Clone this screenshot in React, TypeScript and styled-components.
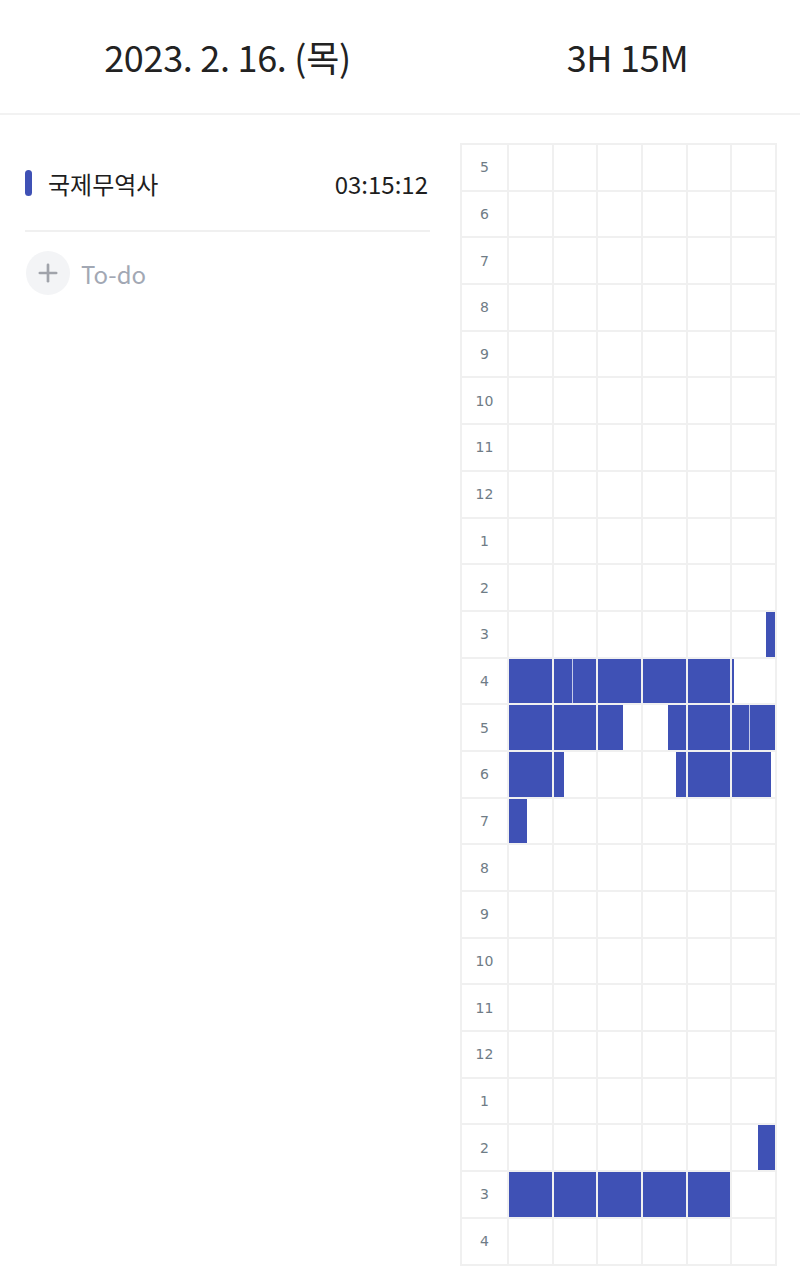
import styled, { createGlobalStyle } from "styled-components";
import { Plus } from "lucide-react";

const GlobalStyle = createGlobalStyle`
  * { box-sizing: border-box; }
  html, body {
    margin: 0;
    padding: 0;
    background: #ffffff;
    font-family: "Noto Sans CJK KR", "Noto Sans", sans-serif;
    color: #222222;
  }
`;

const BLUE = "#3f51b5";

// hour labels, 5am through 4am of the next day
const hours = [5, 6, 7, 8, 9, 10, 11, 12, 1, 2, 3, 4, 5, 6, 7, 8, 9, 10, 11, 12, 1, 2, 3, 4];

// studied minutes for each row, as [start, end] within the hour
const sessions: Record<number, [number, number][]> = {
  10: [[58, 60]],
  11: [
    [0, 14.2],
    [14.2, 50.3],
  ],
  12: [
    [0, 25.8],
    [35.8, 53.8],
    [53.8, 60],
  ],
  13: [
    [0, 12.4],
    [37.8, 59.1],
  ],
  14: [[0, 4.2]],
  21: [[56.1, 60]],
  22: [[0, 50]],
};

export default function App() {
  return (
    <Page>
      <GlobalStyle />
      <Header>
        <HeaderCell>2023. 2. 16. (목)</HeaderCell>
        <HeaderCell $narrow>3H 15M</HeaderCell>
      </Header>
      <Body>
        <TodoList>
          <Subject>
            <ColorBar />
            <SubjectName>국제무역사</SubjectName>
            <SubjectTime>03:15:12</SubjectTime>
          </Subject>
          <AddRow>
            <AddIcon>
              <Plus size={28} strokeWidth={2.3} />
            </AddIcon>
            <AddLabel>To-do</AddLabel>
          </AddRow>
        </TodoList>
        <TimetableWrap>
          <Timetable>
            {hours.map((h, row) => (
              <Row key={row}>
                <HourLabel>{h}</HourLabel>
                {[0, 1, 2, 3, 4, 5].map((col) => (
                  <Slot key={col}>
                    {(sessions[row] || []).map(([s, e], i, list) => {
                      const from = Math.max(s, col * 10);
                      const to = Math.min(e, col * 10 + 10);
                      if (to <= from) return null;
                      const joined = i > 0 && list[i - 1][1] === s && s > col * 10;
                      return (
                        <Fill
                          key={i}
                          $joined={joined}
                          style={{
                            left: `${(from - col * 10) * 10}%`,
                            width: `${(to - from) * 10}%`,
                          }}
                        />
                      );
                    })}
                  </Slot>
                ))}
              </Row>
            ))}
          </Timetable>
        </TimetableWrap>
      </Body>
    </Page>
  );
}

const Page = styled.div`
  width: 800px;
  min-height: 1268px;
  background: #fff;
`;

const Header = styled.header`
  display: flex;
  height: 115px;
  border-bottom: 2px solid #f2f2f2;
`;

const HeaderCell = styled.div<{ $narrow?: boolean }>`
  width: ${({ $narrow }) => ($narrow ? "345px" : "455px")};
  display: flex;
  align-items: center;
  justify-content: center;
  font-size: 36px;
  font-weight: 400;
  letter-spacing: -0.3px;
  color: #222;
  padding-bottom: 2px;
`;

const Body = styled.div`
  display: flex;
`;

const TodoList = styled.section`
  width: 455px;
  padding: 21px 25px 0;
`;

const Subject = styled.div`
  display: flex;
  align-items: center;
  height: 96px;
  border-bottom: 2px solid #f0f0f0;
`;

const ColorBar = styled.span`
  width: 7px;
  height: 26px;
  border-radius: 4px;
  background: ${BLUE};
  margin-right: 16px;
`;

const SubjectName = styled.span`
  flex: 1;
  font-size: 24px;
  font-weight: 400;
  color: #1e1e1e;
`;

const SubjectTime = styled.span`
  font-size: 24px;
  font-weight: 400;
  color: #1e1e1e;
  margin-right: 2px;
`;

const AddRow = styled.div`
  display: flex;
  align-items: center;
  height: 82px;
  gap: 11px;
`;

const AddIcon = styled.span`
  width: 44px;
  height: 44px;
  border-radius: 50%;
  background: #f3f4f6;
  color: #a0a3aa;
  display: flex;
  align-items: center;
  justify-content: center;
  margin-left: 1px;
`;

const AddLabel = styled.span`
  font-size: 24px;
  color: #a2a8b4;
`;

const TimetableWrap = styled.section`
  width: 345px;
  padding: 28px 0 0 5px;
`;

const Timetable = styled.div`
  width: 317px;
  border-top: 2px solid #f0f0f0;
  border-left: 2px solid #f0f0f0;
  display: grid;
  grid-template-rows: repeat(24, 46.7px);
`;

const Row = styled.div`
  display: grid;
  grid-template-columns: 47px repeat(6, 1fr);
`;

const HourLabel = styled.div`
  display: flex;
  align-items: center;
  justify-content: center;
  font-family: "DejaVu Sans", sans-serif;
  font-size: 14px;
  color: #6f7c86;
  border-right: 2px solid #f0f0f0;
  border-bottom: 2px solid #f0f0f0;
`;

const Slot = styled.div`
  position: relative;
  border-right: 2px solid #f0f0f0;
  border-bottom: 2px solid #f0f0f0;
`;

const Fill = styled.div<{ $joined?: boolean }>`
  position: absolute;
  top: 0;
  bottom: 0;
  background: ${BLUE};
  border-left: ${({ $joined }) => ($joined ? "1.5px solid rgba(255,255,255,0.7)" : "none")};
`;
